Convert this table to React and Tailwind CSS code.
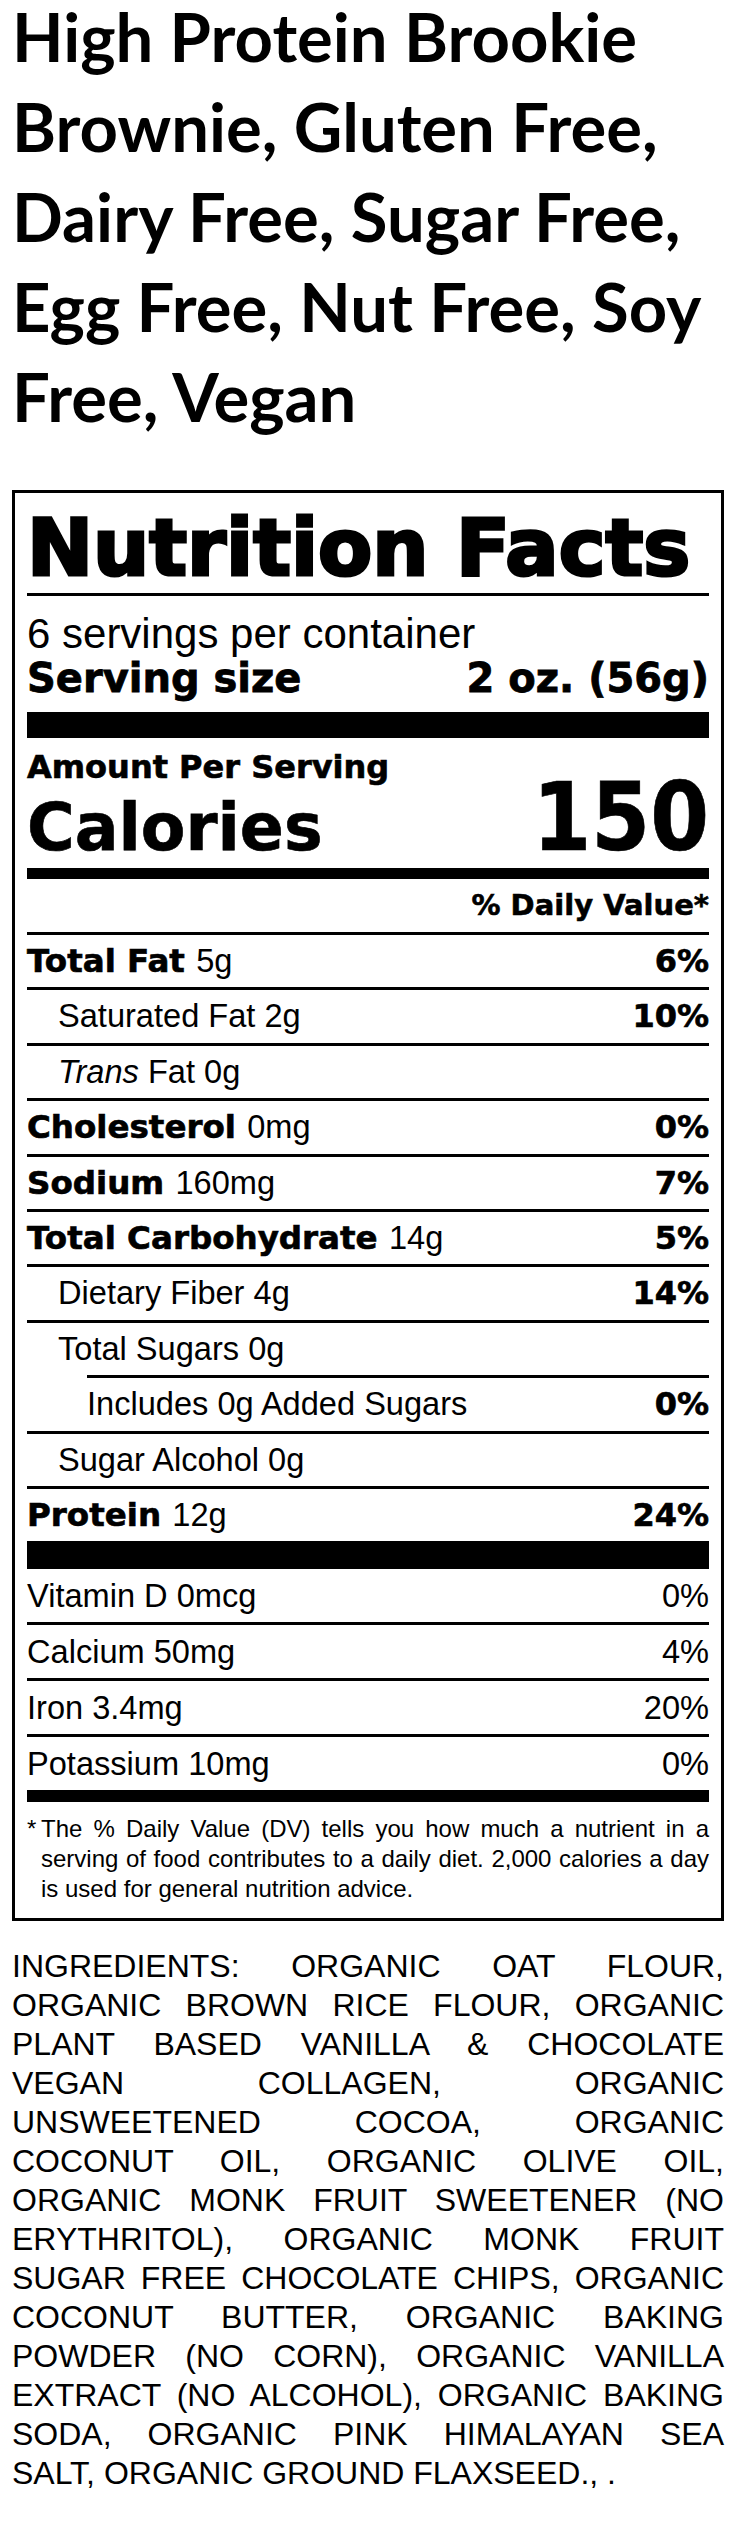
import React from "react";

const heavy = "font-['DejaVu_Sans',sans-serif] font-bold [-webkit-text-stroke:0.04em_#000]";
const heavySm = "font-['DejaVu_Sans',sans-serif] font-bold [-webkit-text-stroke:0.02em_#000]";

const nutrients = [
  { name: "Total Fat", amount: "5g", dv: "6%" },
  { amount: "Saturated Fat 2g", dv: "10%", indent: 1 },
  { amount: "Fat 0g", italic: "Trans", indent: 1 },
  { name: "Cholesterol", amount: "0mg", dv: "0%" },
  { name: "Sodium", amount: "160mg", dv: "7%" },
  { name: "Total Carbohydrate", amount: "14g", dv: "5%" },
  { amount: "Dietary Fiber 4g", dv: "14%", indent: 1 },
  { amount: "Total Sugars 0g", indent: 1 },
  { amount: "Includes 0g Added Sugars", dv: "0%", indent: 2 },
  { amount: "Sugar Alcohol 0g", indent: 1 },
  { name: "Protein", amount: "12g", dv: "24%" },
];

const minerals = [
  { label: "Vitamin D 0mcg", dv: "0%" },
  { label: "Calcium 50mg", dv: "4%" },
  { label: "Iron 3.4mg", dv: "20%" },
  { label: "Potassium 10mg", dv: "0%" },
];

const ingredients = [
  "INGREDIENTS: ORGANIC OAT FLOUR,",
  "ORGANIC BROWN RICE FLOUR, ORGANIC",
  "PLANT BASED VANILLA & CHOCOLATE",
  "VEGAN COLLAGEN, ORGANIC",
  "UNSWEETENED COCOA, ORGANIC",
  "COCONUT OIL, ORGANIC OLIVE OIL,",
  "ORGANIC MONK FRUIT SWEETENER (NO",
  "ERYTHRITOL), ORGANIC MONK FRUIT",
  "SUGAR FREE CHOCOLATE CHIPS, ORGANIC",
  "COCONUT BUTTER, ORGANIC BAKING",
  "POWDER (NO CORN), ORGANIC VANILLA",
  "EXTRACT (NO ALCOHOL), ORGANIC BAKING",
  "SODA, ORGANIC PINK HIMALAYAN SEA",
  "SALT, ORGANIC GROUND FLAXSEED., .",
];

function NutrientRow({ name, amount, dv, italic, indent }) {
  return (
    <>
      <div className={indent === 2 ? "ml-[60px] h-[3px] bg-black" : "h-[3px] bg-black"} />
      <div className="flex h-[52.4px] items-baseline justify-between text-[32.6px] leading-[52.4px]">
        <div className={indent === 2 ? "pl-[60px]" : indent === 1 ? "pl-[31px]" : ""}>
          {name && <span className={`${heavySm} text-[32.5px]`}>{name} </span>}
          {italic && <span className="italic">{italic} </span>}
          <span>{amount}</span>
        </div>
        {dv && <span className={`${heavySm} text-[32px]`}>{dv}</span>}
      </div>
    </>
  );
}

export default function App() {
  return (
    <div className="flex w-[736px] flex-col bg-white pb-[37px] text-black">
      <h1 className="-mt-[9px] px-3 font-['Lato',sans-serif] text-[67px] font-bold leading-[90px]">
        High Protein Brookie Brownie, Gluten Free, Dairy Free, Sugar Free, Egg Free, Nut Free, Soy Free, Vegan
      </h1>

      <section className="mx-3 mt-[49px] border-[3px] border-black px-3 pb-[14px] font-['Liberation_Sans',Arial,sans-serif]">
        <div className={`${heavy} pt-[13px] text-[79px] leading-[84px]`}>Nutrition Facts</div>
        <div className="mt-[3px] h-[3px] bg-black" />
        <div className="mt-[15px] text-[42px] leading-[45px]">6 servings per container</div>
        <div className={`${heavySm} flex justify-between text-[40px] leading-[45px]`}>
          <span>Serving size</span>
          <span>2 oz. (56g)</span>
        </div>
        <div className="mt-[11px] h-[26px] bg-black" />

        <div className={`${heavySm} mt-[11px] text-[32px] leading-[36px]`}>Amount Per Serving</div>
        <div className={`${heavy} mt-[3px] flex items-baseline justify-between leading-[60px]`}>
          <span className="text-[65px]">Calories</span>
          <span className="font-['DejaVu_Sans_Condensed','DejaVu_Sans',sans-serif] text-[94px]">150</span>
        </div>
        <div className="mt-[10px] h-[11px] bg-black" />

        <div className={`${heavySm} mt-[10px] text-right text-[29px] leading-[32px]`}>% Daily Value*</div>
        <div className="mt-[11px]">
          {nutrients.map((n) => (
            <NutrientRow key={n.amount} {...n} />
          ))}
        </div>
        <div className="h-[28px] bg-black" />

        {minerals.map((m, i) => (
          <div key={m.label}>
            {i > 0 && <div className="h-[3px] bg-black" />}
            <div className="flex h-[53px] items-baseline justify-between text-[32.6px] leading-[53px]">
              <span>{m.label}</span>
              <span>{m.dv}</span>
            </div>
          </div>
        ))}
        <div className="h-[12px] bg-black" />

        <div className="mt-[11.5px] flex text-[24px] leading-[30px]">
          <span className="w-[14px] shrink-0">*</span>
          <p className="text-justify">
            The % Daily Value (DV) tells you how much a nutrient in a serving of food contributes to a daily diet. 2,000 calories a day is used for general nutrition advice.
          </p>
        </div>
      </section>

      <div className="mt-[26.5px] px-3 font-['Liberation_Sans',Arial,sans-serif] text-[32px] leading-[39px]">
        {ingredients.map((line, i) => (
          <div
            key={line}
            className={i < ingredients.length - 1 ? "text-justify [text-align-last:justify]" : ""}
          >
            {line}
          </div>
        ))}
      </div>
    </div>
  );
}
